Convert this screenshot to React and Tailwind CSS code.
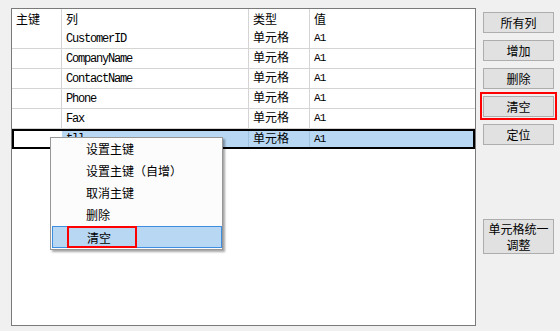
import React from "react";

const cjk = { fontFamily: '"Noto Sans CJK SC", "Microsoft YaHei", sans-serif' };
const mono = { fontFamily: '"Liberation Mono", "Courier New", monospace' };

const rows = ["CustomerID", "CompanyName", "ContactName", "Phone", "Fax"];
const menuItems = ["设置主键", "设置主键（自增）", "取消主键", "删除", "清空"];

function Btn({ children, marked, className = "" }) {
  return (
    <div className={`relative ${className}`}>
      <div className="h-full w-full border border-[#adadad] bg-[#e1e1e1] flex flex-col items-center justify-center text-[12px] leading-[16px] text-black">
        {children}
      </div>
      {marked && <div className="absolute -left-[3px] -right-[3px] -top-[4px] -bottom-[3px] border-2 border-[#ff0000]" />}
    </div>
  );
}

export default function App() {
  const cell = "flex items-center pl-[4px]";
  return (
    <div className="relative w-[560px] h-[331px] bg-[#f0f0f0] flex pl-[11px] pt-[8px] overflow-hidden" style={cjk}>
      {/* grid panel */}
      <div className="w-[465px] h-[318px] border border-[#7a7a7a] bg-white flex flex-col">
        <div className="flex h-[20px] text-[12px] text-black">
          <div className={`${cell} w-[50px] border-r border-[#d4d4d4]`}>主键</div>
          <div className={`${cell} w-[187px] border-r border-[#d4d4d4]`}>列</div>
          <div className={`${cell} w-[61px] border-r border-[#d4d4d4]`}>类型</div>
          <div className={`${cell} flex-1`}>值</div>
        </div>
        {rows.map((name) => (
          <div key={name} className="flex h-[20px] border-b border-[#d4d4d4] text-black">
            <div className="w-[50px] border-r border-[#d4d4d4]" />
            <div className={`${cell} w-[187px] border-r border-[#d4d4d4] text-[12px] tracking-[-1.2px]`} style={mono}>
              {name}
            </div>
            <div className={`${cell} pb-[4px] w-[61px] border-r border-[#d4d4d4] text-[12px]`}>单元格</div>
            <div className={`${cell} flex-1 text-[11px] tracking-[-0.8px]`} style={mono}>
              A1
            </div>
          </div>
        ))}
        {/* selected row */}
        <div className="flex h-[20px] border-2 border-black text-black">
          <div className="w-[48px] bg-white" />
          <div className={`${cell} w-[187px] bg-[#b7d7f2] border-r border-[#9fc2df] text-[12px] tracking-[-1.2px]`} style={mono}>
            tll
          </div>
          <div className={`${cell} pb-[3px] w-[61px] bg-[#b7d7f2] border-r border-[#9fc2df] text-[12px]`}>单元格</div>
          <div className={`${cell} flex-1 bg-[#b7d7f2] text-[11px] tracking-[-0.8px]`} style={mono}>
            A1
          </div>
        </div>
      </div>

      {/* buttons */}
      <div className="ml-[7px] pt-[4px] w-[71px] flex flex-col gap-[7px]">
        <Btn className="h-[21px]">所有列</Btn>
        <Btn className="h-[21px]">增加</Btn>
        <Btn className="h-[21px]">删除</Btn>
        <Btn className="h-[21px]" marked>清空</Btn>
        <Btn className="h-[21px]">定位</Btn>
        <Btn className="h-[35px] mt-[67px]">
          <span>单元格统一</span>
          <span>调整</span>
        </Btn>
      </div>

      {/* context menu */}
      <div className="absolute left-[50px] top-[137px] w-[173px] h-[113px] border border-[#979797] bg-[#fcfcfc] shadow-[2px_2px_2px_rgba(0,0,0,0.35)] flex flex-col">
        {menuItems.map((label, i) => {
          const active = i === menuItems.length - 1;
          return (
            <div
              key={label}
              className={`relative h-[22px] ml-[1px] pl-[34px] text-[12px] leading-[22px] text-black ${
                active ? "bg-[#b7d7f2] border border-[#3d8ee0] leading-[20px] pl-[33px]" : ""
              }`}
            >
              {label}
              {active && <div className="absolute left-[14px] top-[-1px] w-[70px] h-[22px] border-2 border-[#ff0000]" />}
            </div>
          );
        })}
      </div>
    </div>
  );
}
